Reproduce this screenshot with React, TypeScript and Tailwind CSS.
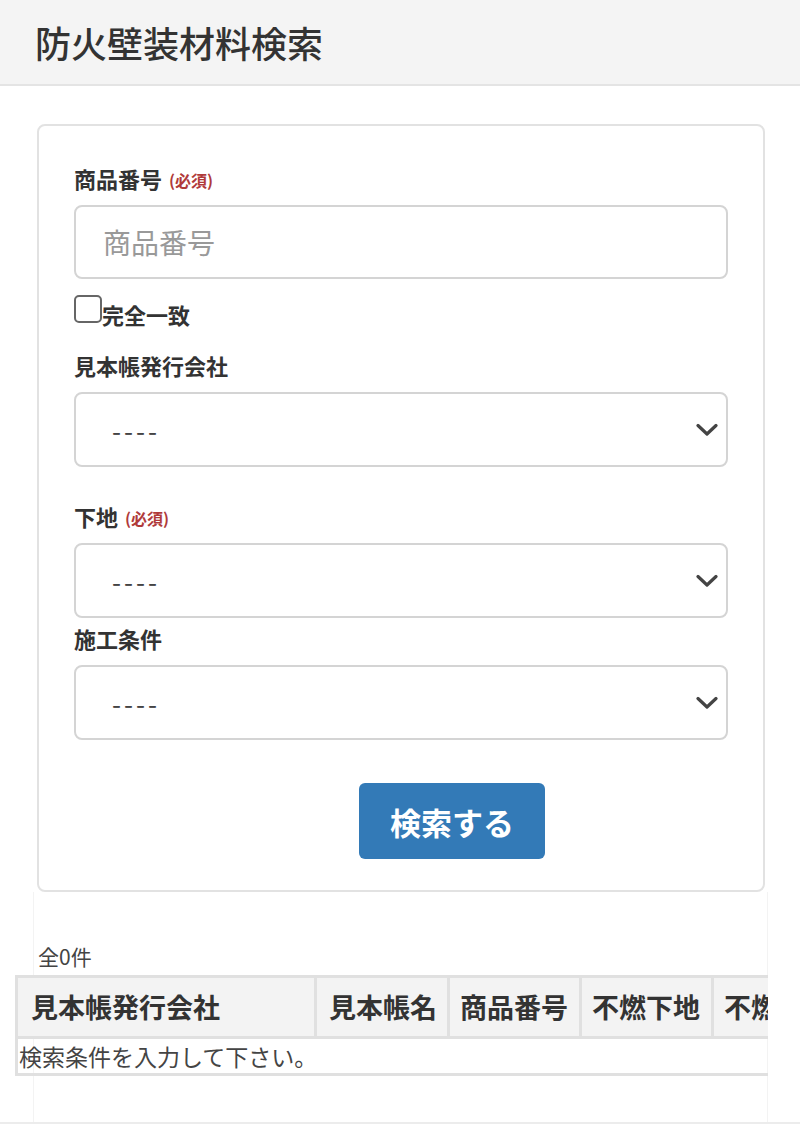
import React from "react";

function Chevron() {
  return (
    <svg
      className="pointer-events-none absolute right-[10px] top-1/2 -translate-y-1/2"
      width="22"
      height="13"
      viewBox="0 0 22 13"
      fill="none"
    >
      <polyline points="2,2 11,10.5 20,2" stroke="#444" strokeWidth="3.2" strokeLinecap="round" strokeLinejoin="round" />
    </svg>
  );
}

function SelectBox() {
  return (
    <div className="relative h-[75px]">
      <select className="h-[75px] w-full appearance-none rounded-lg border-2 border-[#d4d4d4] bg-white pl-[36px] text-[26px] tracking-[3px] text-[#444] outline-none">
        <option>----</option>
      </select>
      <Chevron />
    </div>
  );
}

function Required() {
  return <span className="ml-[7px] text-[16px] font-bold leading-[24px] text-[#b03a3a]">(必須)</span>;
}

export default function App() {
  return (
    <div className="min-h-[1130px] bg-white font-['Noto_Sans_CJK_JP','Liberation_Sans',sans-serif] text-[#333]">
      {/* Header */}
      <header className="flex h-[86px] items-center border-b-2 border-[#e4e4e4] bg-[#f4f4f4] pl-[35px]">
        <h1 className="text-[36px] font-medium leading-none text-[#333]">防火壁装材料検索</h1>
      </header>

      {/* Search form */}
      <div className="pl-[37px] pr-[35px] pt-[38px]">
        <div className="rounded-lg border-2 border-[#e2e2e2] px-[35px] pb-[31px] pt-[38px]">
          <div className="flex h-[28px] items-end text-[22px] font-bold leading-[28px]">
            <span>商品番号</span>
            <Required />
          </div>
          <input
            className="mt-[13px] block h-[74px] w-full rounded-lg border-2 border-[#d4d4d4] px-[27px] text-[28px] text-[#333] outline-none placeholder:text-[#999]"
            placeholder="商品番号"
          />
          <label className="mt-[16px] flex h-[30px] items-start">
            <span className="h-[28px] w-[28px] rounded-[5px] border-2 border-[#666] bg-white" />
            <span className="pt-[8px] text-[22px] font-bold leading-[22px]">完全一致</span>
          </label>

          <div className="mt-[26px] h-[28px] text-[22px] font-bold leading-[28px]">見本帳発行会社</div>
          <div className="mt-[13px]">
            <SelectBox />
          </div>

          <div className="mt-[35px] flex h-[28px] items-end text-[22px] font-bold leading-[28px]">
            <span>下地</span>
            <Required />
          </div>
          <div className="mt-[13px]">
            <SelectBox />
          </div>

          <div className="mt-[6px] h-[28px] text-[22px] font-bold leading-[28px]">施工条件</div>
          <div className="mt-[13px]">
            <SelectBox />
          </div>

          <div className="mt-[43px] flex pl-[285px]">
            <button className="h-[76px] w-[186px] rounded-md bg-[#337ab7] text-[31px] font-bold leading-none text-white">
              検索する
            </button>
          </div>
        </div>
      </div>

      {/* Results */}
      <div className="border-b-2 border-[#ececec]">
        <div className="ml-[33px] mr-[32px] h-[230px] border-x border-[#f3f3f3] pt-[52px]">
          <div className="h-[24px] pl-[4px] text-[21px] leading-[24px] text-[#444]">全0件</div>
          <div className="-ml-[19px] mt-[7px] w-[753px] overflow-hidden">
            <table className="w-[828px] table-fixed border-collapse whitespace-nowrap">
              <thead>
                <tr className="h-[61px] bg-[#f3f3f3] text-left text-[27px] font-bold">
                  <th className="w-[299px] border-[3px] border-[#e0e0e0] pl-[13px]">見本帳発行会社</th>
                  <th className="w-[133px] border-[3px] border-[#e0e0e0] pl-[12px]">見本帳名</th>
                  <th className="w-[132px] border-[3px] border-[#e0e0e0] pl-[10px]">商品番号</th>
                  <th className="w-[132px] border-[3px] border-[#e0e0e0] pl-[10px]">不燃下地</th>
                  <th className="w-[132px] overflow-hidden border-[3px] border-[#e0e0e0] pl-[10px]">不燃区分</th>
                </tr>
              </thead>
              <tbody>
                <tr className="h-[37px]">
                  <td colSpan={5} className="border-[3px] border-[#e0e0e0] pl-[1px] text-[23px] leading-[28px] text-[#444]">
                    検索条件を入力して下さい。
                  </td>
                </tr>
              </tbody>
            </table>
          </div>
        </div>
      </div>
    </div>
  );
}
